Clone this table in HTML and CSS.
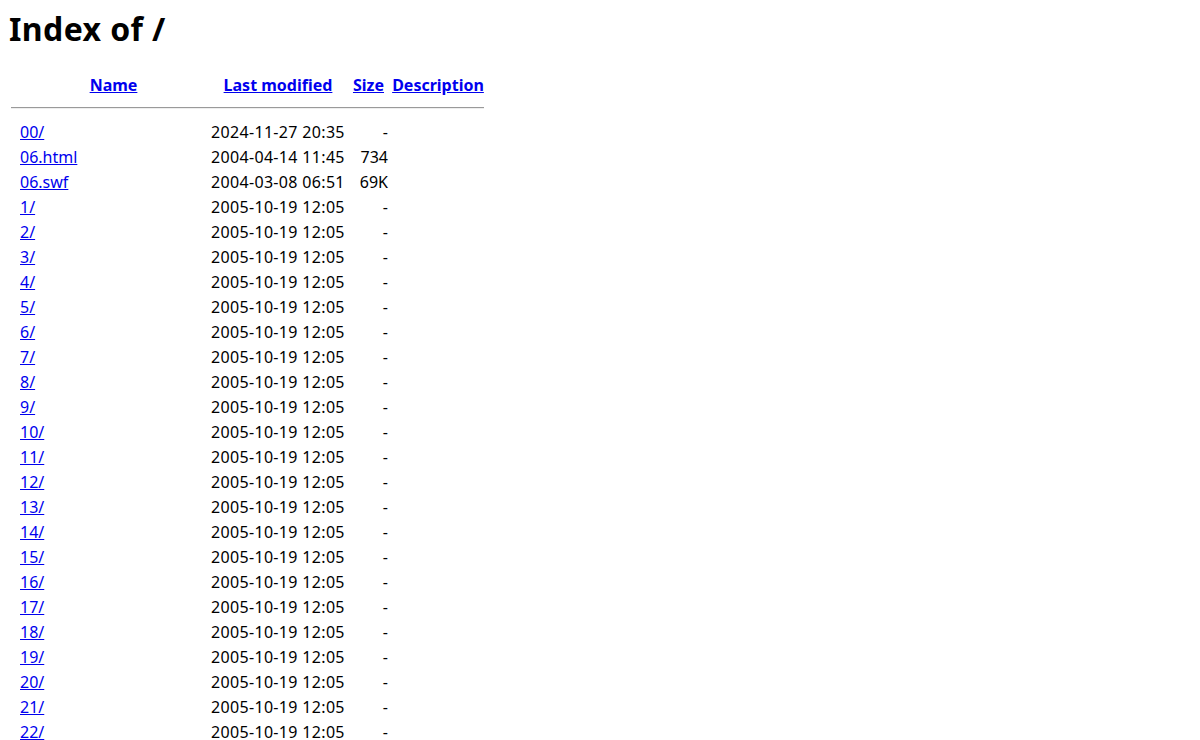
FILE: index.html
```html
<!DOCTYPE html>
<html>
<head>
<meta charset="utf-8">
<title>Index of /</title>
<link rel="stylesheet" href="styles.css">
</head>
<body>
<h1 class="title">Index of /</h1>
<table class="listing">
<tr class="head"><th class="c-icon"></th><th class="c-name"><a href="#">Name</a></th><th class="c-date"><a href="#">Last modified</a></th><th class="c-size"><a href="#">Size</a></th><th class="c-desc"><a href="#">Description</a></th></tr>
<tr class="rule"><th colspan="5"><hr class="sep"></th></tr>
<tr><td></td><td><a href="#">00/</a></td><td class="date">2024-11-27 20:35</td><td class="size">- </td><td></td></tr>
<tr><td></td><td><a href="#">06.html</a></td><td class="date">2004-04-14 11:45</td><td class="size">734 </td><td></td></tr>
<tr><td></td><td><a href="#">06.swf</a></td><td class="date">2004-03-08 06:51</td><td class="size">69K </td><td></td></tr>
<tr><td></td><td><a href="#">1/</a></td><td class="date">2005-10-19 12:05</td><td class="size">- </td><td></td></tr>
<tr><td></td><td><a href="#">2/</a></td><td class="date">2005-10-19 12:05</td><td class="size">- </td><td></td></tr>
<tr><td></td><td><a href="#">3/</a></td><td class="date">2005-10-19 12:05</td><td class="size">- </td><td></td></tr>
<tr><td></td><td><a href="#">4/</a></td><td class="date">2005-10-19 12:05</td><td class="size">- </td><td></td></tr>
<tr><td></td><td><a href="#">5/</a></td><td class="date">2005-10-19 12:05</td><td class="size">- </td><td></td></tr>
<tr><td></td><td><a href="#">6/</a></td><td class="date">2005-10-19 12:05</td><td class="size">- </td><td></td></tr>
<tr><td></td><td><a href="#">7/</a></td><td class="date">2005-10-19 12:05</td><td class="size">- </td><td></td></tr>
<tr><td></td><td><a href="#">8/</a></td><td class="date">2005-10-19 12:05</td><td class="size">- </td><td></td></tr>
<tr><td></td><td><a href="#">9/</a></td><td class="date">2005-10-19 12:05</td><td class="size">- </td><td></td></tr>
<tr><td></td><td><a href="#">10/</a></td><td class="date">2005-10-19 12:05</td><td class="size">- </td><td></td></tr>
<tr><td></td><td><a href="#">11/</a></td><td class="date">2005-10-19 12:05</td><td class="size">- </td><td></td></tr>
<tr><td></td><td><a href="#">12/</a></td><td class="date">2005-10-19 12:05</td><td class="size">- </td><td></td></tr>
<tr><td></td><td><a href="#">13/</a></td><td class="date">2005-10-19 12:05</td><td class="size">- </td><td></td></tr>
<tr><td></td><td><a href="#">14/</a></td><td class="date">2005-10-19 12:05</td><td class="size">- </td><td></td></tr>
<tr><td></td><td><a href="#">15/</a></td><td class="date">2005-10-19 12:05</td><td class="size">- </td><td></td></tr>
<tr><td></td><td><a href="#">16/</a></td><td class="date">2005-10-19 12:05</td><td class="size">- </td><td></td></tr>
<tr><td></td><td><a href="#">17/</a></td><td class="date">2005-10-19 12:05</td><td class="size">- </td><td></td></tr>
<tr><td></td><td><a href="#">18/</a></td><td class="date">2005-10-19 12:05</td><td class="size">- </td><td></td></tr>
<tr><td></td><td><a href="#">19/</a></td><td class="date">2005-10-19 12:05</td><td class="size">- </td><td></td></tr>
<tr><td></td><td><a href="#">20/</a></td><td class="date">2005-10-19 12:05</td><td class="size">- </td><td></td></tr>
<tr><td></td><td><a href="#">21/</a></td><td class="date">2005-10-19 12:05</td><td class="size">- </td><td></td></tr>
<tr><td></td><td><a href="#">22/</a></td><td class="date">2005-10-19 12:05</td><td class="size">- </td><td></td></tr>
</table>
</body>
</html>
```
FILE: styles.css
```css
html, body {
  background: #ffffff;
}
body {
  margin: 8px;
  font-family: "Noto Sans", "Open Sans", sans-serif;
  font-size: 16px;
  color: #000000;
}
.title {
  margin: 0 0 22px 1px;
  font-size: 32px;
  line-height: 42px;
  font-weight: 700;
  letter-spacing: 0.4px;
}
.listing {
  border-spacing: 2px;
  table-layout: fixed;
}
.listing th, .listing td {
  padding: 1px;
  line-height: 21px;
  vertical-align: top;
  white-space: nowrap;
}
.listing th {
  font-weight: 700;
  text-align: center;
}
.listing a {
  color: #0000ee;
}
.c-icon { width: 5px; }
.c-name { width: 187px; }
.c-date { width: 134px; }
.c-size { width: 39px; }
.c-desc { width: 92px; }
.date {
  text-align: left;
  letter-spacing: 0.33px;
}
.size {
  text-align: right;
}
.rule th {
  padding: 1px;
}
.sep {
  margin: 7px 0 9px 0;
  border: 0;
  border-top: 1px solid #9a9a9a;
  border-bottom: 1px solid #eeeeee;
  height: 0;
}
```
